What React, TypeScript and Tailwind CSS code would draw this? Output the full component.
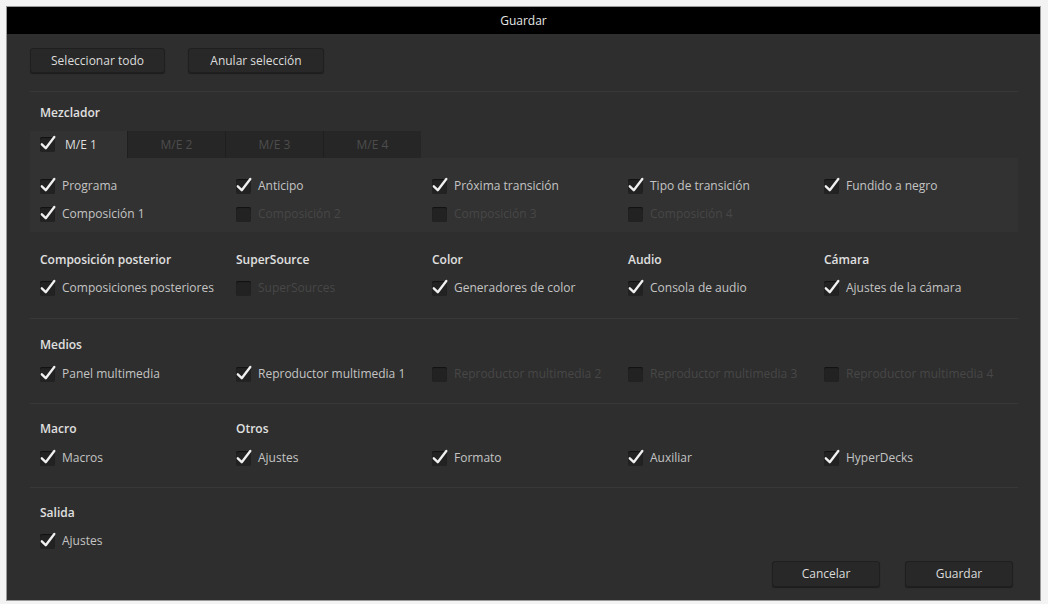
import React from 'react';

type Item = { label: string; on: boolean };

const Check = () => (
    <svg viewBox="0 0 16 16" className="absolute -left-[1px] -top-[3px] h-[18px] w-[18px]">
        <path d="M2.5 9.2 L6 12.6 L13.6 2.6" fill="none" stroke="#f0f0f0" strokeWidth="2.1" strokeLinecap="round" strokeLinejoin="round" />
    </svg>
);

const Box: React.FC<{ on: boolean }> = ({ on }) => (
    <span className="relative inline-block h-[15px] w-[15px] shrink-0 rounded-[2px] bg-[#222222] shadow-[inset_0_1px_1px_rgba(0,0,0,0.5)]">
        {on && <Check />}
    </span>
);

const CheckItem: React.FC<Item> = ({ label, on }) => (
    <div className="flex h-7 w-[196px] items-center gap-[7px] pl-[10px]">
        <Box on={on} />
        <span className={on ? 'whitespace-nowrap text-[#c4c4c4]' : 'whitespace-nowrap text-[#474747]'}>{label}</span>
    </div>
);

const Heading: React.FC<{ text: string }> = ({ text }) => (
    <div className="flex h-5 w-[196px] items-center pl-[10px] font-semibold text-[#e0e0e0]">{text}</div>
);

const Divider = () => <div className="h-px w-[988px] bg-[#383838]" />;

const mixerTabs = ['M/E 1', 'M/E 2', 'M/E 3', 'M/E 4'];

const mixerRow1: Item[] = [
    { label: 'Programa', on: true },
    { label: 'Anticipo', on: true },
    { label: 'Próxima transición', on: true },
    { label: 'Tipo de transición', on: true },
    { label: 'Fundido a negro', on: true },
];

const mixerRow2: Item[] = [
    { label: 'Composición 1', on: true },
    { label: 'Composición 2', on: false },
    { label: 'Composición 3', on: false },
    { label: 'Composición 4', on: false },
];

const groups: { head: string; item: Item }[] = [
    { head: 'Composición posterior', item: { label: 'Composiciones posteriores', on: true } },
    { head: 'SuperSource', item: { label: 'SuperSources', on: false } },
    { head: 'Color', item: { label: 'Generadores de color', on: true } },
    { head: 'Audio', item: { label: 'Consola de audio', on: true } },
    { head: 'Cámara', item: { label: 'Ajustes de la cámara', on: true } },
];

const media: Item[] = [
    { label: 'Panel multimedia', on: true },
    { label: 'Reproductor multimedia 1', on: true },
    { label: 'Reproductor multimedia 2', on: false },
    { label: 'Reproductor multimedia 3', on: false },
    { label: 'Reproductor multimedia 4', on: false },
];

const others: Item[] = [
    { label: 'Macros', on: true },
    { label: 'Ajustes', on: true },
    { label: 'Formato', on: true },
    { label: 'Auxiliar', on: true },
    { label: 'HyperDecks', on: true },
];

const btn =
    'flex h-[25px] items-center justify-center rounded-[3px] border border-[#1f1f1f] bg-[#282828] text-[12px] text-[#dcdcdc] shadow-[0_1px_1px_rgba(0,0,0,0.4)]';

export default function App() {
    return (
        <div className="h-[604px] w-[1048px] bg-[#f3f3f3] pb-[3px] pl-[6px] pr-[7px] pt-[6px] font-['Open_Sans',sans-serif] text-[12px]">
            <div className="flex h-full flex-col border border-[#9a9a9a] bg-[#2e2e2e]">
                <div className="flex h-[27px] shrink-0 items-center justify-center bg-black text-[12px] text-[#e6e6e6]">Guardar</div>

                <div className="flex flex-1 flex-col pl-[23px] pr-[21px]">
                    <div className="flex gap-[23px] pt-[14px]">
                        <button className={`${btn} w-[135px]`}>Seleccionar todo</button>
                        <button className={`${btn} w-[136px]`}>Anular selección</button>
                    </div>

                    <div className="mt-[18px]">
                        <Divider />
                    </div>

                    {/* Mezclador */}
                    <div className="pt-[11px]">
                        <Heading text="Mezclador" />
                        <div className="mt-[8px] flex h-[27px] w-[988px]">
                            {mixerTabs.map((t, i) => (
                                <div
                                    key={t}
                                    className={
                                        i === 0
                                            ? 'flex w-[97px] items-center gap-[10px] bg-[#323232] pl-[10px] text-[#dedede]'
                                            : 'flex w-[98px] items-center justify-center border-l border-[#1f1f1f] bg-[#262626] text-[#4d4d4d]'
                                    }
                                >
                                    {i === 0 && <Box on />}
                                    <span>{t}</span>
                                </div>
                            ))}
                        </div>
                        <div className="w-[988px] bg-[#323232] pb-[4px] pt-[14px]">
                            <div className="flex">
                                {mixerRow1.map((it) => (
                                    <CheckItem key={it.label} {...it} />
                                ))}
                            </div>
                            <div className="flex">
                                {mixerRow2.map((it) => (
                                    <CheckItem key={it.label} {...it} />
                                ))}
                            </div>
                        </div>
                    </div>

                    {/* Composición / SuperSource / Color / Audio / Cámara */}
                    <div className="flex pb-[16px] pt-[18px]">
                        {groups.map((g) => (
                            <div key={g.head} className="flex flex-col">
                                <Heading text={g.head} />
                                <div className="mt-[4px]">
                                    <CheckItem {...g.item} />
                                </div>
                            </div>
                        ))}
                    </div>
                    <Divider />

                    {/* Medios */}
                    <div className="pb-[15px] pt-[16px]">
                        <Heading text="Medios" />
                        <div className="mt-[5px] flex">
                            {media.map((it) => (
                                <CheckItem key={it.label} {...it} />
                            ))}
                        </div>
                    </div>
                    <Divider />

                    {/* Macro / Otros */}
                    <div className="pb-[15px] pt-[15px]">
                        <div className="flex">
                            <Heading text="Macro" />
                            <Heading text="Otros" />
                        </div>
                        <div className="mt-[5px] flex">
                            {others.map((it) => (
                                <CheckItem key={it.label} {...it} />
                            ))}
                        </div>
                    </div>
                    <Divider />

                    {/* Salida */}
                    <div className="pt-[15px]">
                        <Heading text="Salida" />
                        <div className="mt-[4px]">
                            <CheckItem label="Ajustes" on />
                        </div>
                    </div>

                    <div className="mt-[6px] flex w-[988px] justify-end gap-[25px] pr-[5px]">
                        <button className={`${btn} h-[26px] w-[108px]`}>Cancelar</button>
                        <button className={`${btn} h-[26px] w-[108px]`}>Guardar</button>
                    </div>
                </div>
            </div>
        </div>
    );
}
